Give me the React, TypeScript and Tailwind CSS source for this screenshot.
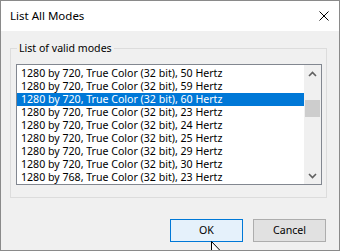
import React from "react"

const modes = [
  "1280 by 720, True Color (32 bit), 50 Hertz",
  "1280 by 720, True Color (32 bit), 59 Hertz",
  "1280 by 720, True Color (32 bit), 60 Hertz",
  "1280 by 720, True Color (32 bit), 23 Hertz",
  "1280 by 720, True Color (32 bit), 24 Hertz",
  "1280 by 720, True Color (32 bit), 25 Hertz",
  "1280 by 720, True Color (32 bit), 29 Hertz",
  "1280 by 720, True Color (32 bit), 30 Hertz",
  "1280 by 768, True Color (32 bit), 23 Hertz",
]

const selected = 2

export default function App() {
  return (
    <div
      className="w-[340px] h-[251px] flex flex-col border border-[#8a8a8a] bg-[#f0f0f0] text-[10.6px] text-black relative overflow-hidden"
      style={{ fontFamily: '"Noto Sans", "Open Sans", sans-serif' }}
    >
      {/* Title bar */}
      <div className="h-[30px] bg-white flex items-center justify-between pl-[9px] pr-[9px] shrink-0">
        <span className="text-[11.5px] leading-none">List All Modes</span>
        <svg width="10" height="10" viewBox="0 0 10 10" className="mr-[1px]">
          <path d="M0.5 0.5 L9.5 9.5 M9.5 0.5 L0.5 9.5" stroke="#000" strokeWidth="1" />
        </svg>
      </div>

      {/* Group box */}
      <div className="relative mt-[17px] ml-[9px] w-[317px] h-[150px] border border-[#dcdcdc] pt-[15px] pl-[5px]">
        <span className="absolute left-[6px] top-[-8px] px-[2px] bg-[#f0f0f0] leading-[14px]">
          List of valid modes
        </span>

        {/* Listbox */}
        <div className="w-[306px] h-[121px] border border-[#828790] bg-white flex">
          <div className="flex-1 flex flex-col pt-[2px]">
            {modes.map((m, i) => (
              <div
                key={i}
                className={
                  "h-[13px] leading-[13px] pl-[4px] whitespace-nowrap " +
                  (i === selected ? "bg-[#0078d7] text-white" : "")
                }
              >
                {m}
              </div>
            ))}
          </div>
          {/* Scrollbar */}
          <div className="w-[17px] bg-[#f0f0f0] flex flex-col items-center">
            <div className="h-[17px] w-full flex items-center justify-center">
              <svg width="9" height="6" viewBox="0 0 9 6">
                <path d="M1 5 L4.5 1.5 L8 5" stroke="#606060" strokeWidth="1.6" fill="none" />
              </svg>
            </div>
            <div className="mt-[18px] w-[15px] h-[17px] bg-[#cdcdcd]" />
            <div className="flex-1" />
            <div className="h-[17px] w-full flex items-center justify-center">
              <svg width="9" height="6" viewBox="0 0 9 6">
                <path d="M1 1 L4.5 4.5 L8 1" stroke="#606060" strokeWidth="1.6" fill="none" />
              </svg>
            </div>
          </div>
        </div>
      </div>

      {/* Buttons */}
      <div className="flex justify-end gap-[10px] mt-[21px] pr-[13px]">
        <button className="w-[73px] h-[23px] border border-[#0078d7] bg-[#e5f1fb] leading-none">
          OK
        </button>
        <button className="w-[73px] h-[23px] border border-[#adadad] bg-[#e1e1e1] leading-none">
          Cancel
        </button>
      </div>

      {/* Mouse cursor */}
      <svg
        className="absolute left-[210px] top-[240px]"
        width="12"
        height="19"
        viewBox="0 0 12 19"
      >
        <path
          d="M0.5 0.5 L0.5 16 L4 12.5 L6.5 18 L8.5 17 L6 11.5 L11 11.5 Z"
          fill="#fff"
          stroke="#000"
          strokeWidth="1"
        />
      </svg>
    </div>
  )
}
